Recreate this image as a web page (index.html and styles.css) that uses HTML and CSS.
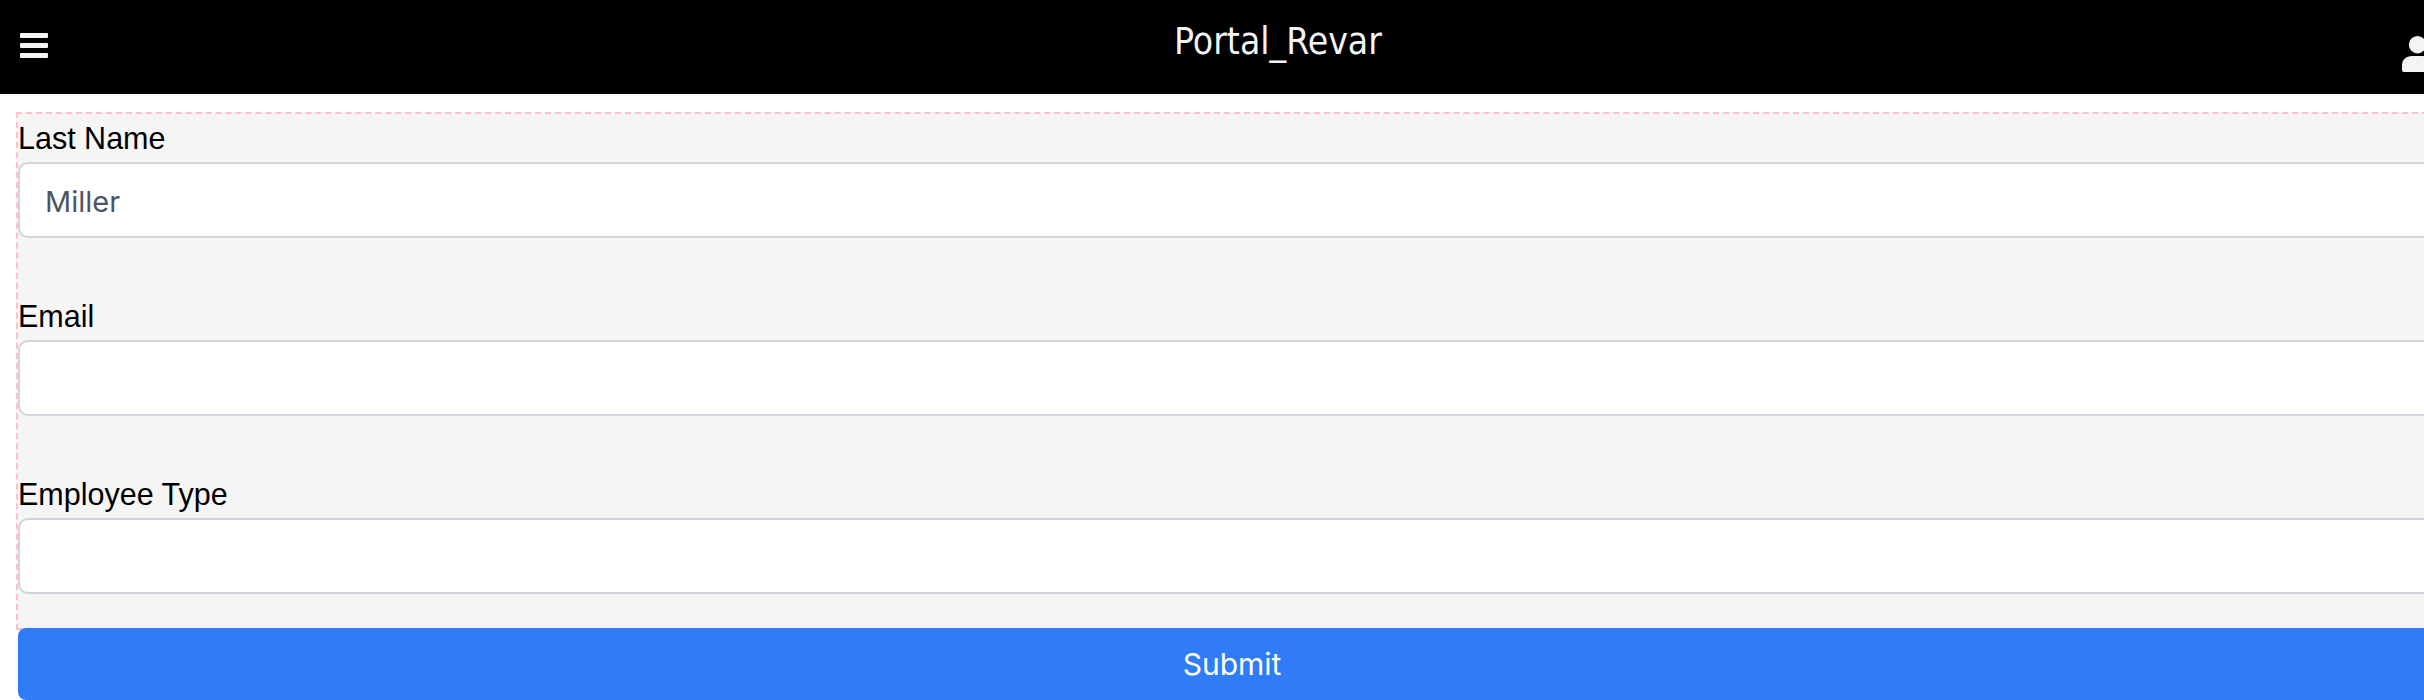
FILE: index.html
```html
<!DOCTYPE html>
<html>
<head>
    <meta charset="UTF-8">
    <title>Portal_Revar</title>
    <link rel="stylesheet" href="styles.css">
</head>
<body>
    <div class="page">
        <header class="topbar">
            <svg class="menu-icon" viewBox="0 0 28 25" aria-hidden="true">
                <rect x="0" y="0" width="28" height="5" rx="1"></rect>
                <rect x="0" y="10" width="28" height="5" rx="1"></rect>
                <rect x="0" y="20" width="28" height="5" rx="1"></rect>
            </svg>
            <h1 class="title">Portal_Revar</h1>
            <svg class="user-icon" viewBox="0 0 30 36" aria-hidden="true">
                <circle cx="15.5" cy="8.7" r="8.7"></circle>
                <path d="M2 36a2 2 0 0 1-2-2v-5c0-5 4-9 10-9h10c6 0 10 4 10 9v5a2 2 0 0 1-2 2z"></path>
            </svg>
        </header>
        <form class="user-form">
            <div class="form-group">
                <label for="lastName">Last Name</label>
                <input type="text" id="lastName" value="Miller">
            </div>
            <div class="form-group">
                <label for="email">Email</label>
                <input type="text" id="email">
            </div>
            <div class="form-group">
                <label for="employeeType">Employee Type</label>
                <input type="text" id="employeeType">
            </div>
        </form>
        <button type="button" class="submit-btn">Submit</button>
    </div>
</body>
</html>
```

FILE: styles.css
```css
html, body {
    margin: 0;
    height: 700px;
    overflow: hidden;
    background: #fff;
}
.page {
    width: 2556px;
}
.topbar {
    display: grid;
    grid-template-columns: 1fr auto 1fr;
    align-items: start;
    height: 94px;
    background: #000;
}
.menu-icon {
    width: 28px;
    height: 25px;
    margin: 33px 0 0 20px;
    fill: #f4f4f4;
}
.title {
    margin: 18px 0 0;
    font-family: "DejaVu Sans", sans-serif;
    font-stretch: condensed;
    font-size: 37px;
    font-weight: normal;
    line-height: 48px;
    color: #f4f4f4;
}
.user-icon {
    justify-self: end;
    width: 30px;
    height: 36px;
    margin: 36px 124px 0 0;
    fill: #f4f4f4;
}
.user-form {
    box-sizing: border-box;
    width: 2432px;
    height: 518px;
    margin: 18px 0 0 16px;
    border: 2px dashed #ffc0cb;
    background: #f5f5f5;
    font-family: "Liberation Sans", sans-serif;
}
.form-group {
    margin-bottom: 54px;
}
label {
    display: block;
    height: 48px;
    font-size: 30.5px;
    line-height: 49px;
    color: #000;
}
input {
    display: block;
    box-sizing: border-box;
    width: 100%;
    height: 76px;
    padding: 2px 25px 0;
    border: 2px solid #d1d5db;
    border-radius: 10px;
    background: #fff;
    font-family: Inter, sans-serif;
    font-size: 29px;
    color: #4b5563;
}
.submit-btn {
    display: block;
    box-sizing: border-box;
    width: 2428px;
    height: 72px;
    margin: -2px 0 0 18px;
    padding: 0;
    border: none;
    border-radius: 8px;
    background: #2f7cf6;
    font-family: Inter, sans-serif;
    font-size: 30px;
    color: #fff;
}
```
